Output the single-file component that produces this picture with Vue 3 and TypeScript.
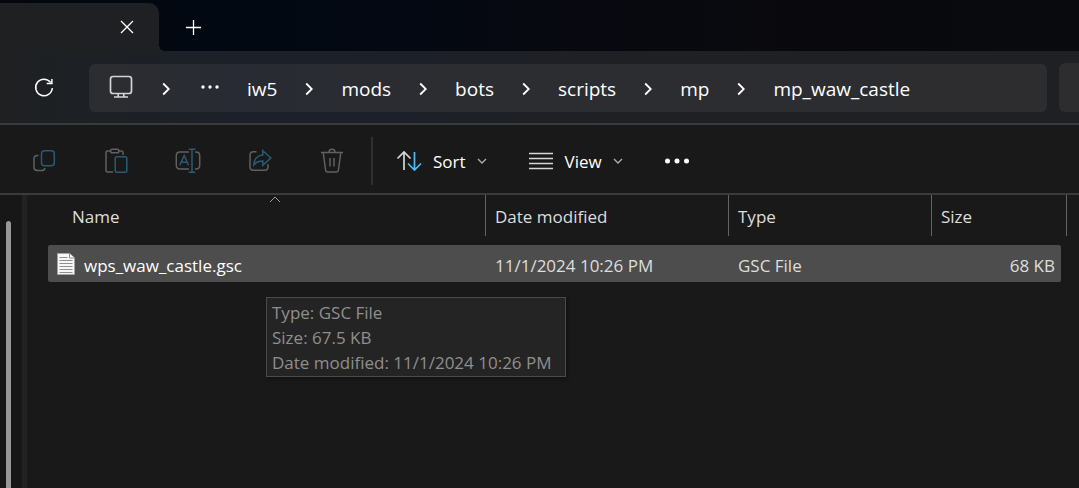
<script setup lang="ts">
interface FileEntry {
  name: string
  modified: string
  type: string
  size: string
}

const crumbs: string[] = ['iw5', 'mods', 'bots', 'scripts', 'mp', 'mp_waw_castle']

const files: FileEntry[] = [
  { name: 'wps_waw_castle.gsc', modified: '11/1/2024 10:26 PM', type: 'GSC File', size: '68 KB' },
]

const tooltip: string[] = ['Type: GSC File', 'Size: 67.5 KB', 'Date modified: 11/1/2024 10:26 PM']
</script>

<template>
  <div class="explorer">
    <header class="titlebar">
      <div class="tab">
        <button class="tab-close" aria-label="Close tab">
          <svg width="14" height="14" viewBox="0 0 14 14"><path d="M1 1l12 12M13 1L1 13" /></svg>
        </button>
      </div>
      <button class="tab-new" aria-label="New tab">
        <svg width="17" height="17" viewBox="0 0 17 17"><path d="M8.500 1v15M1 8.500h15" /></svg>
      </button>
    </header>

    <div class="location">
      <button class="refresh" aria-label="Refresh">
        <svg width="22" height="22" viewBox="0 0 22 22">
          <path d="M17.600 5.400A8.300 8.300 0 1 0 19.300 11M18.900 2v4.600h-5.200" />
        </svg>
      </button>
      <nav class="address" aria-label="Address">
        <button class="device" aria-label="This PC">
          <svg width="24" height="24" viewBox="0 0 24 24">
            <rect x="1.500" y="1.500" width="21" height="17" rx="2.600" />
            <path d="M9.200 18.500v3M14.800 18.500v3M5 22h14" />
          </svg>
        </button>
        <svg class="chevron" width="8" height="14" viewBox="0 0 8 14"><path d="M1.200 1.500L6.800 7l-5.600 5.500" /></svg>
        <button class="overflow" aria-label="More locations">
          <svg width="18" height="4" viewBox="0 0 18 4">
            <circle cx="2" cy="2" r="1.700" /><circle cx="9" cy="2" r="1.700" /><circle cx="16" cy="2" r="1.700" />
          </svg>
        </button>
        <template v-for="(crumb, i) in crumbs" :key="crumb">
          <svg v-if="i > 0" class="chevron" width="8" height="14" viewBox="0 0 8 14">
            <path d="M1.200 1.500L6.800 7l-5.600 5.500" />
          </svg>
          <a class="crumb" href="#">{{ crumb }}</a>
        </template>
      </nav>
      <div class="search"></div>
    </div>

    <div class="toolbar" role="toolbar" aria-label="Commands">
      <button class="tool" aria-label="Copy" disabled>
        <svg width="24" height="24" viewBox="0 0 24 24">
          <path d="M6.400 6.500H5.200C3.200 6.500 2 7.700 2 9.700v8.600c0 2 1.200 3.200 3.200 3.200h4.600c1.800 0 2.900-.9 3.200-2.500" />
          <rect class="accent" x="9.500" y="1.700" width="12.800" height="15" rx="3" />
        </svg>
      </button>
      <button class="tool" aria-label="Paste" disabled>
        <svg width="24" height="26" viewBox="0 0 24 26">
          <path d="M6.500 3H3.500C2.500 3 2 3.500 2 4.500v18C2 23.500 2.500 24 3.500 24H9M15 3h2.500c1 0 1.500.5 1.500 1.500V7" />
          <rect x="6.500" y="1.200" width="8.500" height="3.600" rx="1.800" />
          <rect class="accent" x="11.200" y="8.700" width="11.600" height="15.600" rx="1.500" />
        </svg>
      </button>
      <button class="tool" aria-label="Rename" disabled>
        <svg width="26" height="26" viewBox="0 0 26 26">
          <path d="M14 4H5C2.600 4 1.300 5.300 1.300 7.700v9.600C1.300 19.700 2.600 21 5 21h9M20 4h1c2.400 0 3.700 1.300 3.700 3.700v9.600c0 2.400-1.300 3.700-3.700 3.700h-1" />
          <path class="accent" d="M4.800 17.200L9.200 7.500l4.400 9.700M6.300 14.200h5.800M13.700 1.200h6.600M13.700 24.300h6.600M17 1.200v23.100" />
        </svg>
      </button>
      <button class="tool" aria-label="Share" disabled>
        <svg width="24" height="24" viewBox="0 0 24 24">
          <path d="M8.500 2.800H5.500C3.200 2.800 2 4 2 6.300v11.500c0 2.300 1.200 3.500 3.500 3.500h11c2.300 0 3.500-1.200 3.500-3.500v-2.600" />
          <path class="accent" d="M14.800 1.800l8 7.200-8 7.200v-4.100c-4 0-6.600 1-9 3.900.2-5.700 3.600-9.600 9-10.100z" />
        </svg>
      </button>
      <button class="tool" aria-label="Delete" disabled>
        <svg width="24" height="26" viewBox="0 0 24 26">
          <path d="M1 4.500h22M3.200 4.500l2.400 17.700c.2 1.300.8 1.900 2 1.900h8.800c1.200 0 1.800-.6 2-1.900l2.400-17.700M9 4.300c0-2 1.200-3 3-3s3 1 3 3M10 10v8.500M14 10v8.500" />
        </svg>
      </button>
      <span class="divider"></span>
      <button class="menu">
        <svg class="sort-icon" width="26" height="22" viewBox="0 0 26 22">
          <path d="M8 20V2M1.500 8.500L8 2l6.500 6.500" />
          <path class="blue" d="M18.500 2v18M12 13.500l6.500 6.500 6.500-6.500" />
        </svg>
        <span>Sort</span>
        <svg class="caret" width="10" height="6" viewBox="0 0 10 6"><path d="M1 1l4 4 4-4" /></svg>
      </button>
      <button class="menu">
        <svg class="view-icon" width="26" height="22" viewBox="0 0 26 22">
          <path d="M1 3.500h24M1 8.500h24M1 13.500h24M1 18.500h24" />
        </svg>
        <span>View</span>
        <svg class="caret" width="10" height="6" viewBox="0 0 10 6"><path d="M1 1l4 4 4-4" /></svg>
      </button>
      <button class="more" aria-label="See more">
        <svg width="26" height="6" viewBox="0 0 26 6">
          <circle cx="3.500" cy="3" r="2.500" /><circle cx="13" cy="3" r="2.500" /><circle cx="22.500" cy="3" r="2.500" />
        </svg>
      </button>
    </div>

    <div class="content">
      <aside class="sidebar"><div class="scroll-thumb"></div></aside>
      <main class="pane">
        <table class="files">
          <colgroup>
            <col />
            <col class="col-date" />
            <col class="col-type" />
            <col class="col-size" />
          </colgroup>
          <thead>
            <tr>
              <th class="name-head" aria-sort="ascending">
                Name
                <svg class="sort-mark" width="12" height="7" viewBox="0 0 12 7"><path d="M1 6l5-5 5 5" /></svg>
              </th>
              <th>Date modified</th>
              <th>Type</th>
              <th>Size</th>
            </tr>
          </thead>
          <tbody>
            <tr v-for="file in files" :key="file.name">
              <td>
                <div class="cell first">
                  <svg width="18" height="22" viewBox="0 0 18 22">
                    <path d="M.5.500h12l5 4.500v16.500H.5z" fill="#f7f7f7" stroke="#a3a3a3" />
                    <path d="M12.500.500V5h5" fill="#ffffff" stroke="#8a8a8a" />
                    <path d="M2.500 4.500h8M2.500 7.500h13M2.500 10.500h13M2.500 13.500h13M2.500 16.500h13M2.500 19.500h13" stroke="#8f8f8f" />
                  </svg>
                  <span>{{ file.name }}</span>
                </div>
              </td>
              <td><div class="cell">{{ file.modified }}</div></td>
              <td><div class="cell">{{ file.type }}</div></td>
              <td><div class="cell last">{{ file.size }}</div></td>
            </tr>
          </tbody>
        </table>
        <div class="tooltip" role="tooltip">
          <div v-for="line in tooltip" :key="line">{{ line }}</div>
        </div>
      </main>
    </div>
  </div>
</template>

<style>
body {
  margin: 0;
  background: #191919;
}
</style>

<style scoped>
.explorer {
  display: flex;
  flex-direction: column;
  min-height: 100vh;
  overflow: hidden;
  background: #191919;
  color: #ffffff;
  font-family: "Open Sans", "Noto Sans", sans-serif;
  font-size: 17px;
}

button {
  display: flex;
  align-items: center;
  justify-content: center;
  flex: none;
  padding: 0;
  border: 0;
  background: none;
  color: inherit;
  font: inherit;
}

svg {
  display: block;
  flex: none;
  fill: none;
  stroke: currentColor;
}

.titlebar {
  display: flex;
  align-items: flex-end;
  height: 51px;
  background: linear-gradient(90deg, #04070d 0%, #020812 20%, #030812 35%, #080910 55%, #09090d 75%, #080a0d 100%);
}

.tab {
  position: relative;
  display: flex;
  align-items: center;
  justify-content: flex-end;
  box-sizing: border-box;
  width: 159px;
  height: 48px;
  padding-right: 20px;
  border-top-right-radius: 10px;
  background: linear-gradient(90deg, #1f2022, #1e2023);
}

.tab::after {
  content: "";
  position: absolute;
  left: 100%;
  bottom: 0;
  width: 6px;
  height: 6px;
  background: radial-gradient(circle at 100% 0, transparent 6px, #1e2025 6px);
}

.tab-close {
  width: 24px;
  height: 48px;
}

.tab-new {
  width: 25px;
  height: 47px;
  margin-left: 22px;
}

.tab-close svg,
.tab-new svg {
  stroke-width: 1.3;
}

.location {
  display: flex;
  align-items: center;
  height: 72px;
  border-bottom: 2px solid #3a3a3b;
  background: linear-gradient(90deg, #1e2022 0%, #1c2027 16%, #1c2029 32%, #1f2024 58%, #1e2023 100%);
}

.refresh {
  width: 32px;
  height: 32px;
  margin: 2px 0 0 28px;
}

.refresh svg {
  stroke-width: 1.5;
}

.address {
  display: flex;
  align-items: center;
  flex: 1;
  box-sizing: border-box;
  height: 48px;
  margin: 1px 12px 0 29px;
  padding: 2px 0 0 20px;
  border-radius: 6px;
  background: linear-gradient(90deg, #2b2d30 0%, #282b33 16%, #2c2d31 38%, #2d2d30 100%);
}

.device {
  height: 26px;
  margin-top: -4px;
  color: #d2d3d5;
}

.device svg {
  stroke-width: 1.7;
}

.chevron {
  margin: 0 28px;
  stroke-width: 1.8;
}

.device + .chevron {
  margin-left: 29px;
}

.overflow {
  width: 18px;
  height: 24px;
  margin: -4px 28px 0 3px;
}

.overflow svg,
.more svg {
  fill: currentColor;
  stroke: none;
}

.crumb {
  color: inherit;
  font-size: 19px;
  line-height: 28px;
  text-decoration: none;
}

.search {
  width: 20px;
  height: 49px;
  border-radius: 6px 0 0 6px;
  background: #2d2d2f;
}

.toolbar {
  display: flex;
  align-items: center;
  box-sizing: border-box;
  height: 70px;
  padding: 4px 0 0 20px;
  border-bottom: 2px solid #3b3b3b;
}

.tool {
  width: 48px;
  height: 48px;
  margin-right: 24px;
  color: #606060;
}

.tool svg {
  stroke-width: 1.5;
}

.accent {
  stroke: #2b5a75;
}

.divider {
  width: 2px;
  height: 48px;
  margin: 0 23px 0 -9px;
  background: #303030;
}

.menu {
  gap: 11px;
  margin-right: 41px;
}

.sort-icon {
  color: #d8d8d8;
  stroke-width: 1.7;
}

.blue {
  stroke: #4cbdf5;
}

.view-icon {
  color: #d6d6d6;
  stroke-width: 1.6;
}

.caret {
  color: #b0b0b0;
  stroke-width: 1.3;
}

.content {
  display: flex;
  flex: 1;
}

.sidebar {
  display: flex;
  box-sizing: border-box;
  width: 27px;
  padding: 26px 0 0 6px;
  border-right: 5px solid #222222;
  background: #171717;
}

.scroll-thumb {
  width: 5px;
  border-radius: 3px 3px 0 0;
  background: #989898;
}

.pane {
  position: relative;
  flex: 1;
  padding: 0 12px 0 21px;
}

.files {
  width: 100%;
  border-collapse: separate;
  border-spacing: 0;
  table-layout: fixed;
  color: #dedede;
}

.col-date {
  width: 243px;
}

.col-type {
  width: 203px;
}

.col-size {
  width: 135px;
}

th {
  height: 41px;
  padding: 2px 0 0 9px;
  box-sizing: border-box;
  border-right: 1px solid #636363;
  font-weight: 400;
  text-align: left;
}

.name-head {
  position: relative;
  padding-left: 24px;
}

.sort-mark {
  position: absolute;
  top: 1px;
  left: calc(50% + 2px);
  color: #9b9b9b;
}

td {
  padding: 9px 0 0;
}

.cell {
  display: flex;
  align-items: center;
  box-sizing: border-box;
  height: 37px;
  padding: 4px 0 0 9px;
  background: #4d4d4d;
}

.first {
  gap: 9px;
  border-radius: 2px 0 0 2px;
  color: #ffffff;
}

.first svg {
  margin-top: -4px;
}

.last {
  justify-content: flex-end;
  margin-right: 6px;
  padding-right: 6px;
  border-radius: 0 2px 2px 0;
}

.tooltip {
  position: absolute;
  top: 102px;
  left: 239px;
  padding: 2px 13px 1px 5px;
  border: 1px solid #4b4b4b;
  background: #242424;
  box-shadow: 2px 2px 3px rgba(0, 0, 0, 0.3);
  color: #8f8f8f;
  line-height: 25px;
  white-space: nowrap;
}
</style>
